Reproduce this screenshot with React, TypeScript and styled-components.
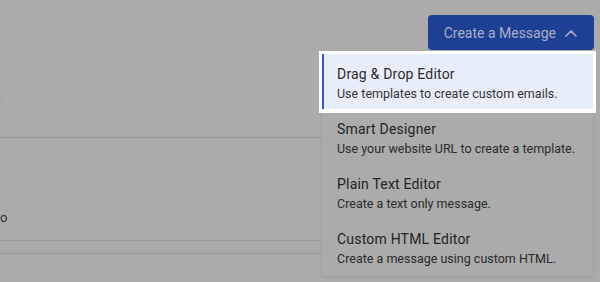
import * as React from "react";
import styled, { createGlobalStyle } from "styled-components";

const GlobalStyle = createGlobalStyle`
  html, body {
    margin: 0;
    padding: 0;
    background: #ababab;
  }
  body {
    font-family: Roboto, "Liberation Sans", sans-serif;
  }
`;

const Page = styled.div`
  position: relative;
  width: 600px;
  height: 282px;
  overflow: hidden;
  background: #ababab;
`;

const Header = styled.div`
  display: flex;
  justify-content: flex-end;
  padding: 15px 6px 0 0;
  height: 35px;
`;

const CreateButton = styled.button`
  display: flex;
  align-items: center;
  gap: 9px;
  height: 35px;
  box-sizing: border-box;
  padding: 0 17px 0 16px;
  border: none;
  border-radius: 4px;
  background: #1d3f94;
  color: #aab1c6;
  font-family: Roboto, "Liberation Sans", sans-serif;
  font-size: 14px;
  white-space: nowrap;
  cursor: pointer;
`;

const Content = styled.div`
  width: 560px;
`;

const Section = styled.div<{ $height: number }>`
  height: ${p => p.$height}px;
  border-bottom: 1px solid #999999;
  display: flex;
  flex-direction: column;
  justify-content: flex-end;
  align-items: flex-start;
`;

const Fragment = styled.span<{ $color: string; $bottom: number }>`
  margin-bottom: ${p => p.$bottom}px;
  font-size: 13px;
  line-height: 16px;
  color: ${p => p.$color};
`;

const Menu = styled.div`
  position: absolute;
  top: 50px;
  left: 321px;
  width: 271px;
  padding: 4px 0 2px;
  background: #ababab;
  border: 1px solid #a2a2a2;
  border-top: none;
  box-shadow: 0 1px 2px rgba(0, 0, 0, 0.06);
`;

const MenuItem = styled.div<{ $active?: boolean }>`
  height: 55px;
  box-sizing: border-box;
  padding: 10px 12px 0 13px;
  border-left: 2px solid ${p => (p.$active ? "#2c5ad8" : "transparent")};
  background: ${p => (p.$active ? "#e8eef9" : "transparent")};
  box-shadow: ${p => (p.$active ? "0 0 0 3px #ffffff, 0 1px 0 3px #ffffff" : "none")};
  position: relative;
  z-index: ${p => (p.$active ? 1 : 0)};
  cursor: pointer;
`;

const ItemTitle = styled.div<{ $active?: boolean }>`
  font-size: 14px;
  line-height: 20px;
  letter-spacing: 0.2px;
  color: ${p => (p.$active ? "#2b2b2b" : "#232323")};
`;

const ItemDescription = styled.div<{ $active?: boolean }>`
  font-size: 12.5px;
  line-height: 19px;
  white-space: nowrap;
  color: ${p => (p.$active ? "#333333" : "#2a2a2a")};
`;

const ChevronUp = () => (
  <svg width="12" height="8" viewBox="0 0 12 8" fill="none">
    <polyline
      points="1,7 6,2 11,7"
      stroke="currentColor"
      strokeWidth="1.6"
      strokeLinecap="round"
      strokeLinejoin="round"
    />
  </svg>
);

const options = [
  {
    title: "Drag & Drop Editor",
    description: "Use templates to create custom emails."
  },
  {
    title: "Smart Designer",
    description: "Use your website URL to create a template."
  },
  {
    title: "Plain Text Editor",
    description: "Create a text only message."
  },
  {
    title: "Custom HTML Editor",
    description: "Create a message using custom HTML."
  }
];

const App: React.FC = () => {
  return (
    <Page>
      <GlobalStyle />
      <Header>
        <CreateButton>
          Create a Message
          <ChevronUp />
        </CreateButton>
      </Header>
      <Content>
        <Section $height={87}>
          <Fragment $color="#8d93b8" $bottom={28}>
            :
          </Fragment>
        </Section>
        <Section $height={102}>
          <Fragment $color="#333333" $bottom={14}>
            o
          </Fragment>
        </Section>
        <Section $height={12} />
      </Content>
      <Menu>
        {options.map((option, i) => (
          <MenuItem key={option.title} $active={i === 0}>
            <ItemTitle $active={i === 0}>{option.title}</ItemTitle>
            <ItemDescription $active={i === 0}>
              {option.description}
            </ItemDescription>
          </MenuItem>
        ))}
      </Menu>
    </Page>
  );
};

export default App;
